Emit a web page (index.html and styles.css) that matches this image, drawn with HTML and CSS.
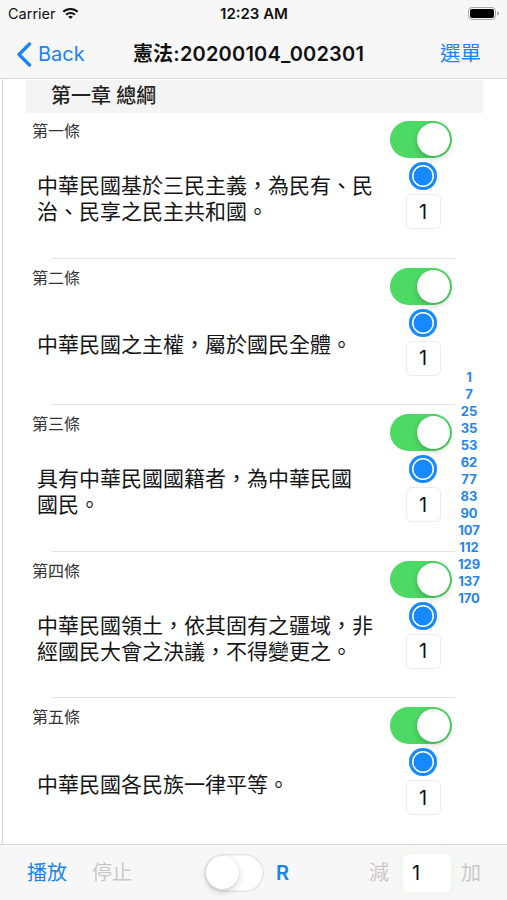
FILE: index.html
```html
<!DOCTYPE html>
<html lang="zh-Hant">
<head>
<meta charset="utf-8">
<title>憲法</title>
<link rel="stylesheet" href="styles.css">
</head>
<body>
<div class="screen">
  <div class="status">
    <div class="status-left">
      <span class="carrier">Carrier</span>
      <svg class="wifi" width="17" height="12" viewBox="0 0 17 12">
        <path d="M0.6 4.1 A11.5 11.5 0 0 1 16.4 4.1 L15 5.6 A9.5 9.5 0 0 0 2 5.6 Z" fill="#111"/>
        <path d="M3.4 7 A7.5 7.5 0 0 1 13.6 7 L12.2 8.4 A5.5 5.5 0 0 0 4.8 8.4 Z" fill="#111"/>
        <path d="M6.2 9.8 A3.4 3.4 0 0 1 10.8 9.8 L8.5 12 Z" fill="#111"/>
      </svg>
    </div>
    <div class="status-time">12:23 AM</div>
    <div class="status-right">
      <svg class="battery" width="32" height="13" viewBox="0 0 32 13">
        <rect x="0.5" y="0.5" width="27" height="12" rx="3.5" fill="none" stroke="#a8a8a8"/>
        <rect x="2" y="2" width="24" height="9" rx="2" fill="#000"/>
        <path d="M29 4.5 a2 2 0 0 1 0 4 z" fill="#a8a8a8"/>
      </svg>
    </div>
  </div>

  <div class="navbar">
    <div class="nav-back">
      <svg class="chevron" width="16" height="25" viewBox="0 0 16 25">
        <path d="M13.5 2 L3 12.5 L13.5 23" fill="none" stroke="#1a84f0" stroke-width="3.4" stroke-linecap="round" stroke-linejoin="round"/>
      </svg>
      <span>Back</span>
    </div>
    <div class="nav-title">憲法:20200104_002301</div>
    <div class="nav-menu">選單</div>
  </div>

  <div class="content">
    <div class="edge"></div>
    <div class="table">
      <div class="section-header">第一章 總綱</div>

      <div class="row">
        <div class="row-body">
          <div class="row-main">
            <div class="row-label">第一條</div>
            <div class="row-text"><p>中華民國基於三民主義，為民有、民治、民享之民主共和國。</p></div>
          </div>
          <div class="row-controls">
            <div class="switch on"><span class="knob"></span></div>
            <div class="radio"></div>
            <div class="count">1</div>
          </div>
        </div>
        <div class="sep"></div>
      </div>

      <div class="row">
        <div class="row-body">
          <div class="row-main">
            <div class="row-label">第二條</div>
            <div class="row-text"><p>中華民國之主權，屬於國民全體。</p></div>
          </div>
          <div class="row-controls">
            <div class="switch on"><span class="knob"></span></div>
            <div class="radio"></div>
            <div class="count">1</div>
          </div>
        </div>
        <div class="sep"></div>
      </div>

      <div class="row">
        <div class="row-body">
          <div class="row-main">
            <div class="row-label">第三條</div>
            <div class="row-text"><p>具有中華民國國籍者，為中華民國<span class="nowrap">國民。</span></p></div>
          </div>
          <div class="row-controls">
            <div class="switch on"><span class="knob"></span></div>
            <div class="radio"></div>
            <div class="count">1</div>
          </div>
        </div>
        <div class="sep"></div>
      </div>

      <div class="row">
        <div class="row-body">
          <div class="row-main">
            <div class="row-label">第四條</div>
            <div class="row-text"><p>中華民國領土，依其固有之疆域，非經國民大會之決議，不得變更之。</p></div>
          </div>
          <div class="row-controls">
            <div class="switch on"><span class="knob"></span></div>
            <div class="radio"></div>
            <div class="count">1</div>
          </div>
        </div>
        <div class="sep"></div>
      </div>

      <div class="row">
        <div class="row-body">
          <div class="row-main">
            <div class="row-label">第五條</div>
            <div class="row-text"><p>中華民國各民族一律平等。</p></div>
          </div>
          <div class="row-controls">
            <div class="switch on"><span class="knob"></span></div>
            <div class="radio"></div>
            <div class="count">1</div>
          </div>
        </div>
        <div class="sep"></div>
      </div>
    </div>

    <ul class="index">
      <li>1</li><li>7</li><li>25</li><li>35</li><li>53</li><li>62</li><li>77</li>
      <li>83</li><li>90</li><li>107</li><li>112</li><li>129</li><li>137</li><li>170</li>
    </ul>
  </div>

  <div class="toolbar">
    <span class="tb-play">播放</span>
    <span class="tb-stop">停止</span>
    <div class="switch off tb-switch"><span class="knob"></span></div>
    <span class="tb-r">R</span>
    <span class="tb-minus">減</span>
    <div class="tb-box">1</div>
    <span class="tb-plus">加</span>
  </div>
</div>
</body>
</html>
```

FILE: styles.css
```css
* { box-sizing: border-box; }

html, body {
  margin: 0;
  padding: 0;
  background: #fff;
}

body {
  font-family: "Inter", "Noto Sans CJK TC", "Noto Sans", sans-serif;
  color: #111;
}

.screen {
  width: 507px;
  height: 900px;
  display: flex;
  flex-direction: column;
  overflow: hidden;
}

/* status bar */
.status {
  height: 28px;
  background: #f7f7f7;
  display: grid;
  grid-template-columns: 1fr auto 1fr;
  align-items: center;
  padding: 0 7px 0 8px;
}
.status-left {
  display: flex;
  align-items: center;
  gap: 6px;
}
.carrier {
  font-size: 14.5px;
  line-height: 18px;
  color: #111;
}
.wifi { margin-top: -2px; }
.status-time {
  font-size: 15px;
  font-weight: 600;
  line-height: 18px;
  color: #111;
}
.status-right {
  display: flex;
  justify-content: flex-end;
  margin-top: -2px;
}

/* nav bar */
.navbar {
  height: 51px;
  background: #f7f7f7;
  border-bottom: 1px solid #d9d9d9;
  display: grid;
  grid-template-columns: 1fr auto 1fr;
  align-items: center;
  padding: 2px 26px 0 16px;
}
.nav-back {
  display: flex;
  align-items: center;
  gap: 6px;
  color: #1a84f0;
  font-size: 20px;
  line-height: 26px;
}
.nav-title {
  font-size: 20px;
  font-weight: 600;
  line-height: 26px;
  color: #111;
  letter-spacing: 0.2px;
}
.nav-menu {
  justify-self: end;
  color: #1a84f0;
  font-size: 20.5px;
  line-height: 26px;
}

/* content */
.content {
  position: relative;
  flex: 1;
  display: flex;
  overflow: hidden;
  background: #fff;
}
.edge {
  width: 24px;
  flex: none;
  margin-left: 2px;
  border-left: 1px solid #d8d8d8;
}
.table {
  width: 457px;
  flex: none;
  display: flex;
  flex-direction: column;
  padding-top: 1px;
}
.section-header {
  height: 33px;
  flex: none;
  background: #f4f4f4;
  padding-left: 25px;
  font-size: 20px;
  font-weight: 500;
  line-height: 33px;
  color: #222;
}

.row {
  height: 146.6px;
  flex: none;
  display: flex;
  flex-direction: column;
}
.row-body {
  flex: 1;
  display: flex;
}
.row-main {
  flex: 1;
  display: flex;
  flex-direction: column;
}
.row-label {
  padding: 8px 0 0 6px;
  font-size: 16px;
  line-height: 20px;
  color: #333;
}
.row-text {
  flex: 1;
  display: flex;
  align-items: center;
  padding: 0 0 1px 11px;
}
.row-text p {
  margin: 0;
  width: 345px;
  font-size: 21px;
  line-height: 26px;
  color: #151515;
}
.nowrap { white-space: nowrap; }

.row-controls {
  width: 66px;
  flex: none;
  margin-right: 27px;
  padding-top: 8px;
  display: flex;
  flex-direction: column;
  align-items: center;
  gap: 4px;
}
.sep {
  height: 1px;
  flex: none;
  margin: 0 28px 1px 26px;
  background: #e3e3e3;
}

/* switch */
.switch {
  width: 62px;
  height: 37px;
  border-radius: 19px;
  display: flex;
  align-items: center;
  padding: 2px;
  flex: none;
}
.switch.on {
  background: #4cd964;
  justify-content: flex-end;
  margin-right: 4px;
}
.switch.off {
  background: #fff;
  box-shadow: inset 0 0 0 1.5px #e6e6e6;
  justify-content: flex-start;
}
.knob {
  width: 33px;
  height: 33px;
  border-radius: 50%;
  background: #fff;
  box-shadow: 0 3px 6px rgba(0,0,0,0.18), 0 0 0 0.5px rgba(0,0,0,0.06);
}

.radio {
  width: 28px;
  height: 28px;
  border-radius: 50%;
  background: #1689ff;
  box-shadow: inset 0 0 0 3px #1689ff, inset 0 0 0 4.5px #fff;
  flex: none;
}

.count {
  width: 35px;
  height: 35px;
  border-radius: 6px;
  border: 1px solid #ececec;
  background: #fff;
  display: flex;
  align-items: center;
  justify-content: center;
  font-size: 20px;
  color: #111;
  flex: none;
}

/* section index overlay */
.index {
  position: absolute;
  top: 290px;
  right: 24px;
  width: 28px;
  margin: 0;
  padding: 0;
  list-style: none;
  text-align: center;
  font-size: 13px;
  font-weight: 700;
  line-height: 17px;
  color: #2585ea;
}

/* bottom toolbar */
.toolbar {
  height: 56px;
  flex: none;
  background: #f7f7f7;
  border-top: 1px solid #dadada;
  display: flex;
  align-items: center;
  padding-left: 27px;
  font-size: 20px;
  line-height: 26px;
}
.tb-play { color: #1a84f0; }
.tb-stop { color: #c9c9cc; margin-left: 25px; }
.tb-switch { margin-left: 72px; width: 60px; height: 38px; }
.tb-r { color: #1a84f0; font-weight: 600; margin-left: 12px; }
.tb-minus { color: #c9c9cc; margin-left: 80px; }
.tb-box {
  margin-left: 14px;
  width: 48px;
  height: 38px;
  background: #fff;
  border-radius: 6px;
  box-shadow: 0 0 8px rgba(120, 230, 120, 0.12);
  padding-left: 9px;
  display: flex;
  align-items: center;
  color: #111;
}
.tb-plus { color: #c9c9cc; margin-left: 10px; }
```
